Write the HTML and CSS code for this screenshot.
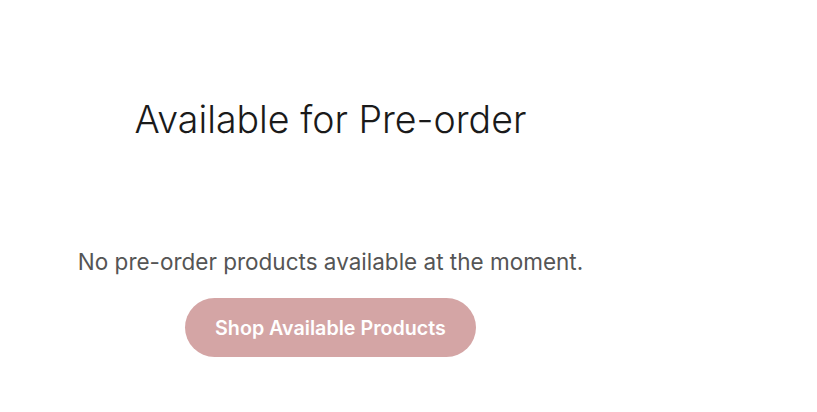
FILE: index.html
```html
<!DOCTYPE html>
<html lang="en">
<head>
<meta charset="utf-8">
<title>Available for Pre-order</title>
<link rel="stylesheet" href="styles.css">
</head>
<body>
<section class="preorder">
  <h1 class="preorder-title">Available for Pre-order</h1>
  <div class="preorder-empty">
    <p class="preorder-message">No pre-order products available at the moment.</p>
    <a class="preorder-button" href="#">Shop Available Products</a>
  </div>
</section>
</body>
</html>
```

FILE: styles.css
```css
* { box-sizing: border-box; }
html, body { margin: 0; padding: 0; background: #ffffff; }
body { font-family: Inter, "Noto Sans", sans-serif; }

.preorder {
  width: 661px;
  padding-top: 97px;
  display: flex;
  flex-direction: column;
  align-items: center;
  text-align: center;
}

.preorder-title {
  margin: 0;
  font-size: 37.5px;
  line-height: 45px;
  font-weight: 300;
  color: #1a1a1a;
}

.preorder-empty {
  margin-top: 102.5px;
  display: flex;
  flex-direction: column;
  align-items: center;
}

.preorder-message {
  margin: 0;
  font-size: 22.5px;
  line-height: 33px;
  color: #555555;
}

.preorder-button {
  margin-top: 20.5px;
  display: inline-block;
  padding: 17.5px 30px;
  font-size: 19.7px;
  line-height: 24px;
  font-weight: 600;
  color: #ffffff;
  background: #d4a5a5;
  border-radius: 30px;
  text-decoration: none;
}
```
